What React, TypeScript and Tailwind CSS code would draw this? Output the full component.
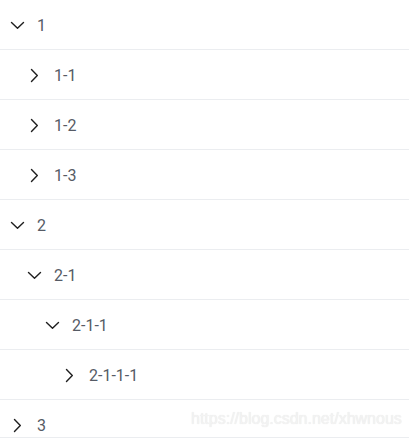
import React from "react";

type Node = { label: string; level: number; open: boolean };

const nodes: Node[] = [
  { label: "1", level: 0, open: true },
  { label: "1-1", level: 1, open: false },
  { label: "1-2", level: 1, open: false },
  { label: "1-3", level: 1, open: false },
  { label: "2", level: 0, open: true },
  { label: "2-1", level: 1, open: true },
  { label: "2-1-1", level: 2, open: true },
  { label: "2-1-1-1", level: 3, open: false },
];

const pad = ["pl-[9px]", "pl-[26px]", "pl-[44px]", "pl-[61px]"];

function Chevron({ open }: { open: boolean }) {
  return (
    <svg width="16" height="16" viewBox="0 0 16 16" fill="none" className="shrink-0">
      {open ? (
        <path d="M2.5 5.5 L8.5 11.3 L14.5 5.5" stroke="#1f1f1f" strokeWidth="1.4" strokeLinecap="round" strokeLinejoin="round" />
      ) : (
        <path d="M5.5 2.5 L11.3 8.5 L5.5 14.5" stroke="#1f1f1f" strokeWidth="1.4" strokeLinecap="round" strokeLinejoin="round" />
      )}
    </svg>
  );
}

export default function App() {
  return (
    <div className="relative w-[409px] h-[438px] overflow-hidden bg-white" style={{ fontFamily: "Roboto, 'Noto Sans', sans-serif" }}>
      {nodes.map((n, i) => (
        <div key={i} className={`flex items-center h-[50px] border-b border-[#ebedf0] ${pad[n.level]}`}>
          <Chevron open={n.open} />
          <span className="ml-[12px] text-[16px] leading-[24px] text-[#565b65] pt-[2px]">{n.label}</span>
        </div>
      ))}
      <div className="h-[38px] border-b border-[#ebedf0] pl-[9px] pt-[13px]">
        <div className="flex items-center h-[24px]">
          <Chevron open={false} />
          <span className="ml-[12px] text-[16px] leading-[24px] text-[#565b65] pt-[2px]">3</span>
        </div>
      </div>
      <div
        className="absolute left-[191px] top-[409px] text-[16px] leading-[20px] text-[#f3f3f3]"
        style={{ fontFamily: "'Liberation Sans', Arial, sans-serif", textShadow: "0 0 1px #e2e2e2" }}
      >
        https://blog.csdn.net/xhwnous
      </div>
    </div>
  );
}
